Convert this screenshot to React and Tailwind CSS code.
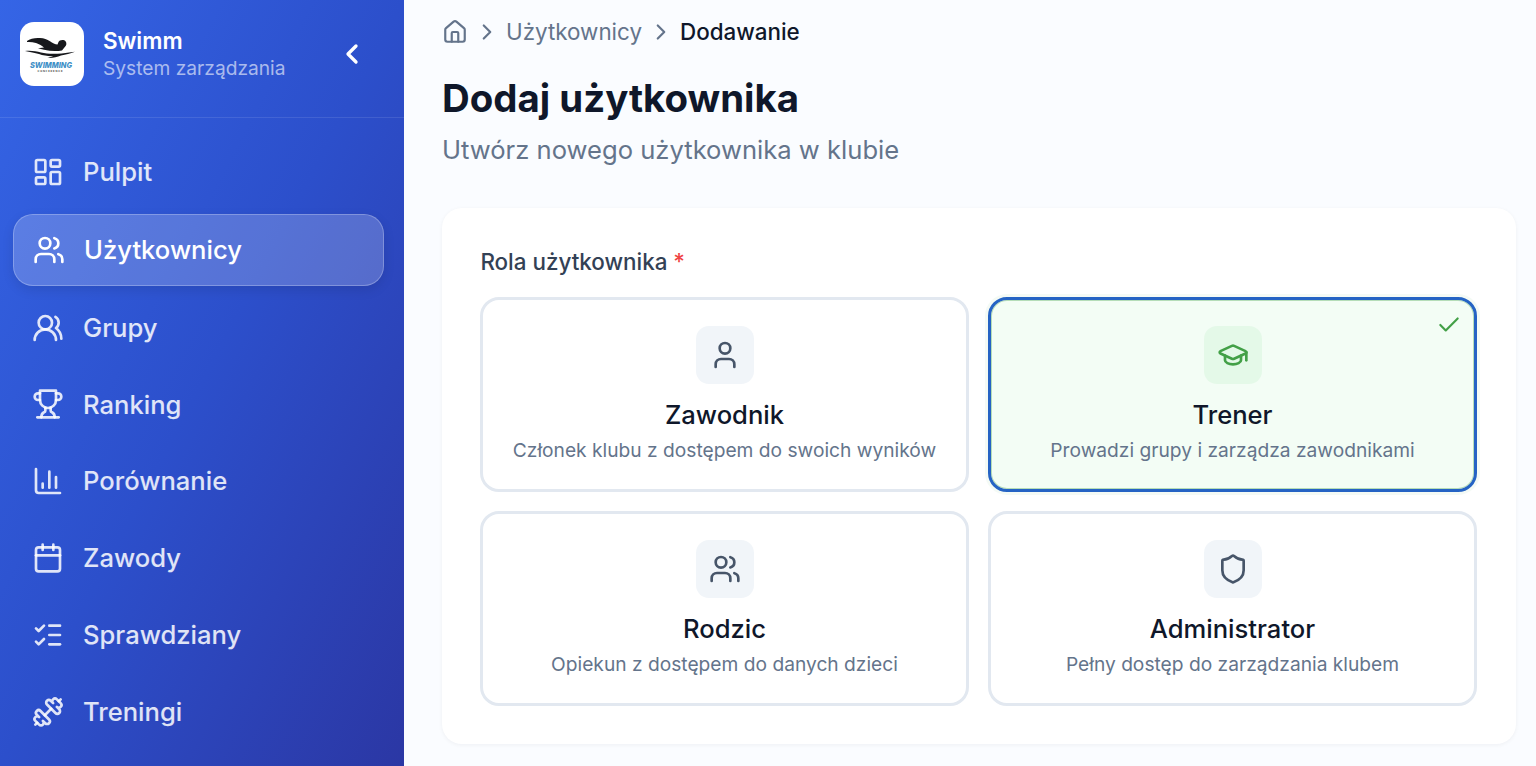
import React from 'react';
import {
  LayoutDashboard,
  Users,
  UsersRound,
  ChartColumn,
  Calendar,
  ListChecks,
  Dumbbell,
  House,
  ChevronRight,
  ChevronLeft,
  User,
  GraduationCap,
  Shield,
  Check,
} from 'lucide-react';

// older lucide trophy, the current package draws it differently
const TrophyIcon = ({ size = 32, className }) => (
  <svg width={size} height={size} viewBox="0 0 24 24" fill="none" stroke="currentColor" strokeWidth="2" strokeLinecap="round" strokeLinejoin="round" className={className}>
    <path d="M6 9H4.5a2.5 2.5 0 0 1 0-5H6" />
    <path d="M18 9h1.5a2.5 2.5 0 0 0 0-5H18" />
    <path d="M4 22h16" />
    <path d="M10 14.66V17c0 .55-.47.98-.97 1.21C7.85 18.75 7 20.24 7 22" />
    <path d="M14 14.66V17c0 .55.47.98.97 1.21C16.15 18.75 17 20.24 17 22" />
    <path d="M18 2H6v7a6 6 0 0 0 12 0V2Z" />
  </svg>
);

const NAV_ITEMS = [
  { label: 'Pulpit', icon: LayoutDashboard },
  { label: 'Użytkownicy', icon: Users, active: true },
  { label: 'Grupy', icon: UsersRound },
  { label: 'Ranking', icon: TrophyIcon },
  { label: 'Porównanie', icon: ChartColumn },
  { label: 'Zawody', icon: Calendar },
  { label: 'Sprawdziany', icon: ListChecks },
  { label: 'Treningi', icon: Dumbbell },
];

const ROLES = [
  { title: 'Zawodnik', desc: 'Członek klubu z dostępem do swoich wyników', icon: User },
  { title: 'Trener', desc: 'Prowadzi grupy i zarządza zawodnikami', icon: GraduationCap, selected: true },
  { title: 'Rodzic', desc: 'Opiekun z dostępem do danych dzieci', icon: Users },
  { title: 'Administrator', desc: 'Pełny dostęp do zarządzania klubem', icon: Shield },
];

const SwimLogo = () => (
  <svg viewBox="0 0 64 64" className="w-16 h-16">
    {/* arm, back and head */}
    <path d="M7 19c3-2.400 8-3.400 13-3 4 .3 7 1.400 10 3.200 2.500 1.600 5 3 7.500 3.400l1-2.600c.8-2.400 5.600-2.800 7.200-.6 1.100 1.600.8 3.800-.5 5.200l-3.200 3.800c-5 1-12 .8-18-.6l-6-1.600 6-.8c-2-1.600-4.600-3.400-8-4.400-3-.9-6.200-1.300-9-1z" fill="#17181c" />
    {/* water */}
    <path d="M5 29c6-.6 11 .2 16 1.600 8 2 20 1.400 28-.2l6-.6c-5 1.600-9 3-14 3.600-4 1.400-9 3-14 2.400 3-.4 5-1 6-1.600-5 .2-10-.8-14-2.200-4-1.200-9-2-14-3z" fill="#17181c" />
    <text x="31" y="45.5" textAnchor="middle" fontSize="8" fontWeight="800" fontStyle="italic" fill="#3f8fc6" fontFamily="Inter, sans-serif" textLength="42" lengthAdjust="spacingAndGlyphs">SWIMMING</text>
    <text x="30" y="49.5" textAnchor="middle" fontSize="2.6" fontWeight="700" fill="#444" fontFamily="Inter, sans-serif" textLength="25">CONFERENCE</text>
  </svg>
);

const NavItem = ({ label, icon: Icon, active }) => (
  <a
    className={
      active
        ? 'flex items-center gap-[19px] h-[72px] shrink-0 pl-[19px] ml-[13px] mr-[20px] my-[1px] rounded-[20px] bg-white/20 border border-white/25 text-white shadow-[0_4px_12px_rgba(0,0,0,0.1)]'
        : 'flex items-center gap-[19px] h-[72px] shrink-0 pl-[19px] ml-[13px] mr-[20px] text-white/85'
    }
  >
    <Icon size={32} strokeWidth={2} className="shrink-0" />
    <span className="text-[25.6px] leading-none font-medium">{label}</span>
  </a>
);

const RoleCard = ({ title, desc, icon: Icon, selected }) => (
  <div
    className={
      selected
        ? 'relative flex flex-col items-center h-[195px] pt-[26px] rounded-[19px] border-[3px] border-[#2563c4] bg-[#f3fdf5] shadow-[0_0_0_3px_rgba(76,175,80,0.06),inset_0_0_0_1px_rgba(67,160,71,0.35)]'
        : 'relative flex flex-col items-center h-[195px] pt-[26px] rounded-[19px] border-[3px] border-[#e2e8f0] bg-white'
    }
  >
    {selected && <Check size={26} strokeWidth={2} className="absolute top-[12px] right-[12px] text-[#43a047]" />}
    <div
      className={
        selected
          ? 'flex items-center justify-center w-[58px] h-[57.6px] rounded-[13px] bg-[#e4f9e8] text-[#43a047]'
          : 'flex items-center justify-center w-[58px] h-[57.6px] rounded-[13px] bg-[#f1f5f9] text-[#475569]'
      }
    >
      <Icon size={32} strokeWidth={2} />
    </div>
    <div className="mt-[15px] text-[25.6px] leading-[32px] font-medium text-[#0f172a]">{title}</div>
    <div className="mt-[5px] text-[19.2px] leading-[28px] text-[#64748b]">{desc}</div>
  </div>
);

export default function App() {
  return (
    <div className="flex h-[766px] w-[1536px] overflow-hidden font-['Inter',sans-serif] bg-[#fafcff]">
      {/* Sidebar */}
      <aside className="flex flex-col w-[404px] shrink-0 bg-gradient-to-br from-[#3565e6] via-[#2c4fcb] to-[#2b37a4]">
        <div className="flex items-center h-[118px] shrink-0 pl-[20px] pr-[36px] pb-[10px] border-b border-white/10">
          <div className="w-16 h-16 rounded-[14px] bg-white overflow-hidden shrink-0">
            <SwimLogo />
          </div>
          <div className="ml-[19px] flex-1 -mt-[1px]">
            <div className="text-[22.4px] leading-[30px] font-semibold text-white">Swimm</div>
            <div className="text-[19.2px] leading-[24px] text-white/60">System zarządzania</div>
          </div>
          <ChevronLeft size={32} strokeWidth={2.5} className="text-white" />
        </div>
        <nav className="flex flex-col gap-[4.8px] pt-[18px]">
          {NAV_ITEMS.map((item) => (
            <NavItem key={item.label} {...item} />
          ))}
        </nav>
      </aside>

      {/* Main */}
      <main className="flex-1 min-w-0 pl-[38px] pr-[20px] pt-[16px]">
        <div className="flex items-center h-[32px] text-[22.4px] text-[#64748b]">
          <House size={26} strokeWidth={2} />
          <ChevronRight size={26} strokeWidth={2} className="ml-[6px]" />
          <span className="ml-[6px]">Użytkownicy</span>
          <ChevronRight size={26} strokeWidth={2} className="ml-[6px]" />
          <span className="ml-[6px] font-medium text-[#0f172a]">Dodawanie</span>
        </div>
        <h1 className="mt-[20px] text-[38.4px] leading-[60px] font-bold text-[#0f172a]">Dodaj użytkownika</h1>
        <p className="mt-[2px] text-[25.6px] leading-[40px] text-[#64748b]">Utwórz nowego użytkownika w klubie</p>

        <section className="mt-[38px] pt-[38px] pb-[38px] pl-[38px] pr-[39px] rounded-[20px] bg-white shadow-[0_1px_4px_rgba(15,23,42,0.05)]">
          <div className="pl-[0.4px] text-[22.4px] leading-[32px] font-medium text-[#334155]">
            Rola użytkownika <span className="text-[#ef4444]">*</span>
          </div>
          <div className="grid grid-cols-2 gap-[19px] mt-[19px]">
            {ROLES.map((role) => (
              <RoleCard key={role.title} {...role} />
            ))}
          </div>
        </section>
      </main>
    </div>
  );
}
